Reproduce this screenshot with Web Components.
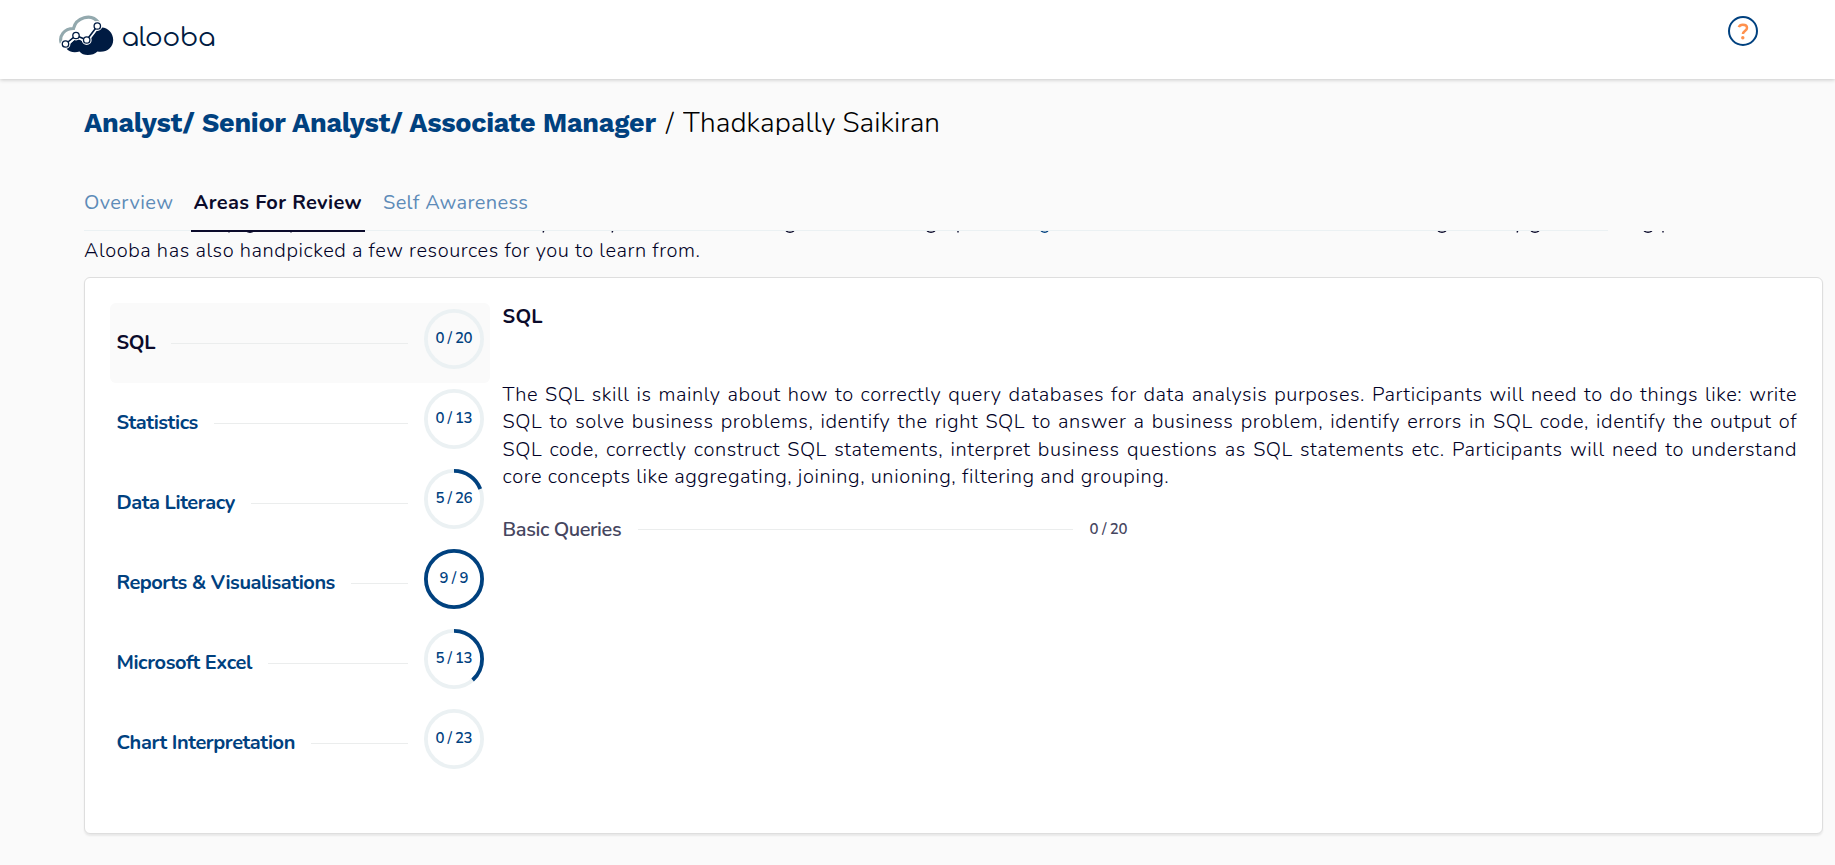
<!DOCTYPE html>
<html lang="en">
<head>
<meta charset="utf-8">
<title>Alooba – Areas For Review</title>
<style>
html,body{margin:0;height:100%}
body{background:#fafafa;font-family:Nunito,Lato,sans-serif;color:#0b0b2b;overflow:hidden}
</style>
</head>
<body>
<review-page></review-page>
<script>
function define(name, html, setup) {
  customElements.define(name, class extends HTMLElement {
    constructor() {
      super();
      this.attachShadow({ mode: 'open' }).innerHTML = typeof html === 'function' ? html(this) : html;
    }
    connectedCallback() { if (setup) setup(this, this.shadowRoot); }
  });
}

define('review-page', `
<style>
:host{display:block;height:865px}
main{padding:25px 12px 0 84px}
</style>
<site-header></site-header>
<main>
  <page-title></page-title>
  <tab-bar></tab-bar>
  <intro-text></intro-text>
  <skills-card></skills-card>
</main>`);

define('site-header', `
<style>
:host{display:flex;justify-content:space-between;align-items:flex-start;height:79px;box-sizing:border-box;background:#fff;padding:15px 77px 0 59px;box-shadow:0 1px 4px rgba(0,0,0,.2);position:relative}
.brand{display:flex}
.name{font:400 26px/34px Comfortaa,Quicksand,Inter,sans-serif;font-feature-settings:"cv11";color:#001b42;margin:5.500px 0 0 7.500px}
.help{margin-top:1px;width:30px;height:30px;box-sizing:border-box;border:2.4px solid #00417f;border-radius:50%;display:grid;place-items:center}
</style>
<div class="brand">
<svg width="55" height="41" viewBox="0 0 55 41" fill="none">
<path d="M2.200 28C0 21 5 13.500 14.500 13.500C17 3 32-2.500 39.500 7.500" stroke="#93a9ae" stroke-width="3.200"/>
<path d="M7 33L17 23L27.500 28L39.500 13C47 10.500 54.200 17 54.200 25C54.200 33 47 38 38.500 36.500C34 41 24 41.500 20.500 36.500C16 38 10 37.500 7 33Z" fill="#001b42"/>
<path d="M6.500 29L17 20.500L27.700 25L38.300 11" stroke="#fff" stroke-width="5"/>
<g fill="#fff" stroke="#fff" stroke-width="3.500"><circle cx="6.500" cy="29" r="3.200"/><circle cx="17" cy="20.500" r="3.200"/><circle cx="27.700" cy="25" r="3.200"/><circle cx="38.300" cy="11" r="3.200"/></g>
<path d="M6.500 29L17 20.500L27.700 25L38.300 11" stroke="#001b42" stroke-width="1.600"/>
<g fill="#fff" stroke="#001b42" stroke-width="1.300"><circle cx="6.500" cy="29" r="3.200"/><circle cx="17" cy="20.500" r="3.200"/><circle cx="27.700" cy="25" r="3.200"/><circle cx="38.300" cy="11" r="3.200"/></g>
</svg>
<div class="name"><fit-text w="94">alooba</fit-text></div>
</div>
<div class="help"><svg width="12" height="17" viewBox="0 0 12 17" fill="none"><path d="M1.800 4.200C2.400 2.400 4 1.700 5.800 1.700C8.200 1.700 10 2.900 10 4.900C10 7.600 6.200 7.700 5.900 11" stroke="#ff914d" stroke-width="2.500"/><circle cx="5.800" cy="14.700" r="1.700" fill="#ff914d"/></svg></div>`);

define('page-title', `
<style>
:host{display:flex;height:82px;align-items:flex-start}
b{font:700 27px/38px "Work Sans",Inter,sans-serif;color:#00417f}
span{font-weight:340;font-size:28px;line-height:39px;color:#000;margin-left:10px}
.name{height:31px;overflow:hidden;margin-left:9.500px}
</style>
<b><fit-text w="572">Analyst/ Senior Analyst/ Associate Manager</fit-text></b>
<span>/</span><span class="name"><fit-text w="257">Thadkapally Saikiran</fit-text></span>`);

define('tab-bar', `
<style>
:host{display:flex;gap:15px;width:1524px;height:45px;box-shadow:inset 0 -1px #ebf1f3;line-height:34px;font-size:20px;color:#5d8bb8}
div{padding:0 3px;height:46px;box-sizing:border-box}
.first{padding-left:0}
.on{font-weight:700;color:#0b0b2b;border-bottom:2px solid #0b0b2b;padding-left:2.500px;padding-right:3.500px}
</style>
<div class="first"><fit-text w="89">Overview</fit-text></div>
<div class="on"><fit-text w="168">Areas For Review</fit-text></div>
<div><fit-text w="145">Self Awareness</fit-text></div>`);

define('intro-text', `
<style>
:host{display:block;height:46px;font-weight:350;font-size:20px;line-height:27px;color:#000025}
svg{display:block}
p{margin:3px 0 0}
</style>
<svg width="1740" height="3" viewBox="0 1 1740 3" fill="none" stroke-width="1.400"></svg>
<p><fit-text w="616">Alooba has also handpicked a few resources for you to learn from.</fit-text></p>`,
(el, root) => {
  const p = [145, 207, 874, 1579], g = [166, 706, 847, 1358, 1451, 1564], y = [459, 528, 1433];
  root.querySelector('svg').innerHTML =
    p.map(x => `<path d="M${x} 0V2.500" stroke="#0b0b2b"/>`).join('') +
    g.map(x => `<path d="M${x - 4} 1Q${x} 3.500 ${x + 4} 1" stroke="#0b0b2b"/>`).join('') +
    y.map(x => `<path d="M${x + 1} 0L${x} 2.500" stroke="#0b0b2b"/>`).join('') +
    `<path d="M957 1Q961 3.500 964 1" stroke="#00417f"/>`;
});

define('skills-card', `
<style>
:host{display:grid;grid-template-columns:380px 1fr;column-gap:12.600px;height:557px;box-sizing:border-box;background:#fff;border:1px solid #dedede;border-radius:6px;box-shadow:0 2px 2px rgba(0,0,0,.07);padding:25px}
</style>
<nav>
<skill-row label="SQL" w="39" score="0" total="20" active></skill-row>
<skill-row label="Statistics" w="82" score="0" total="13"></skill-row>
<skill-row label="Data Literacy" w="119" score="5" total="26"></skill-row>
<skill-row label="Reports &amp; Visualisations" w="219" score="9" total="9"></skill-row>
<skill-row label="Microsoft Excel" w="136" score="5" total="13"></skill-row>
<skill-row label="Chart Interpretation" w="179" score="0" total="23"></skill-row>
</nav>
<skill-detail></skill-detail>`);

define('skill-row', el => `
<style>
:host{display:flex;height:80px;box-sizing:border-box;padding:6px 6px 0 6.400px;border-radius:6px;color:#00417f}
:host([active]){background:#fafafa}
.label{font-weight:680;font-size:20px;line-height:68px}
:host([active]) .label{color:#0b0b2b}
i{flex:1;height:1px;background:#ebeded;margin:34px 16px 0}
</style>
<div class="label"><fit-text w="${el.getAttribute('w')}">${el.getAttribute('label').replace('&', '&amp;')}</fit-text></div>
<i></i>
<score-ring score="${el.getAttribute('score')}" total="${el.getAttribute('total')}"></score-ring>`);

define('score-ring', el => {
  const s = +el.getAttribute('score'), t = +el.getAttribute('total');
  return `
<style>
:host{display:grid;width:60px;height:60px;justify-items:center}
svg,div{grid-area:1/1}
div{font-weight:650;font-size:15px;line-height:59px}
</style>
<svg width="60" height="60" fill="none" stroke-width="3.800">
<circle cx="30" cy="30" r="28.100" stroke="#ebf1f3"/>
<circle cx="30" cy="30" r="28.100" stroke="#00417f" pathLength="100" stroke-dasharray="${s / t * 100} 101" transform="rotate(-90 30 30)" ${s ? '' : 'visibility="hidden"'}/>
</svg>
<div><fit-text w="${t < 10 ? 29 : 37}">${s} / ${t}</fit-text></div>`;
});

define('skill-detail', `
<style>
:host{display:block;font-size:20px}
h2{font-size:20px;line-height:26px;margin:1px 0 51px;font-weight:700}
p{margin:0;line-height:27.4px;font-weight:350;color:#000025}
.line{display:block;width:1294.500px;text-align-last:justify;white-space:nowrap;letter-spacing:.55px}
.topic{display:flex;align-items:center;width:625px;margin-top:24px;line-height:30px;color:#46465f;font-weight:560}
i{flex:1;height:1px;background:#ebeded;margin:0 17px 0 16px}
.score{font-size:15px;font-weight:650;line-height:28px;margin-top:-1px}
</style>
<h2><fit-text w="40">SQL</fit-text></h2>
<p>
<span class="line">The SQL skill is mainly about how to correctly query databases for data analysis purposes. Participants will need to do things like: write</span>
<span class="line">SQL to solve business problems, identify the right SQL to answer a business problem, identify errors in SQL code, identify the output of</span>
<span class="line">SQL code, correctly construct SQL statements, interpret business questions as SQL statements etc. Participants will need to understand</span>
<fit-text w="666">core concepts like aggregating, joining, unioning, filtering and grouping.</fit-text>
</p>
<div class="topic"><fit-text w="119">Basic Queries</fit-text><i></i><div class="score"><fit-text w="38">0 / 20</fit-text></div></div>`);

/* Tracks its text so that it fills the width w. Defined last: its surroundings are laid out by then. */
define('fit-text', `<style>:host{display:block;white-space:nowrap}span{display:inline-block}</style><span><slot></slot></span>`,
(el, root) => {
  const w = +el.getAttribute('w'), span = root.querySelector('span');
  const n = el.textContent.length - 1;
  span.style.letterSpacing = '0px';
  const gap = (w - span.getBoundingClientRect().width) / n;
  span.style.letterSpacing = gap.toFixed(3) + 'px';
  el.style.width = w + 'px';
});
</script>
</body>
</html>
